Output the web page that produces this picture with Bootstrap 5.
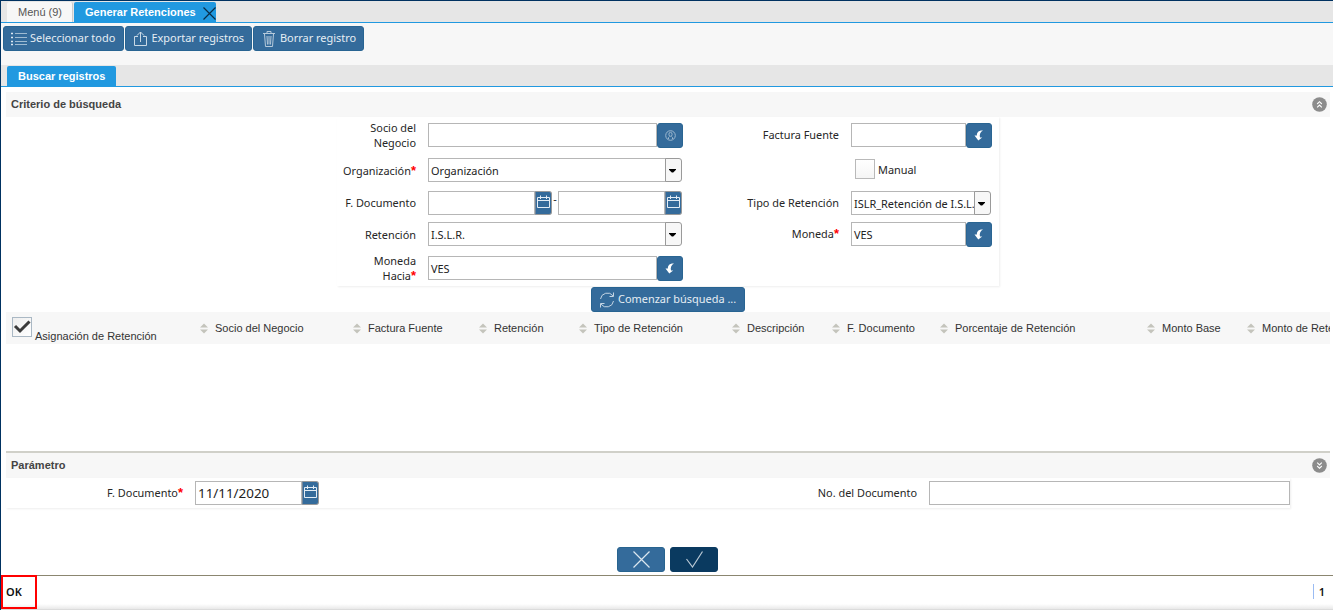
<!DOCTYPE html>
<html lang="es">
<head>
<meta charset="utf-8">
<meta name="viewport" content="width=device-width, initial-scale=1">
<title>Generar Retenciones</title>
<link href="https://cdn.jsdelivr.net/npm/bootstrap@5.3.0/dist/css/bootstrap.min.css" rel="stylesheet">
<style>
:root { --blue:#346b9b; --tab:#2199e0; --navy:#0a3a60; --soft:#f7f7f7; --line:#b6b6b6; }
body { font-family:"Noto Sans",sans-serif; font-size:10.9px; line-height:15px; color:#262626; background:#fff; height:610px; overflow:hidden; }
.window { height:610px; border-top:1px solid #003261; border-left:1px solid #003261; overflow:hidden; }
.arial { font-family:"Liberation Sans",Arial,sans-serif; }
.tabstrip { height:22px; background:#e6e6e6; border-bottom:1px solid var(--tab); padding-top:1px; font-size:11px; }
.tabitem { height:20px; line-height:20px; border-radius:2px 2px 0 0; }
.tab-menu { width:66px; margin-left:6px; padding-left:11px; background:var(--soft); border-right:1px solid #ccc; color:#555; }
.tab-active { background:var(--tab); color:#fff; font-weight:bold; padding-left:11px; }
.tab-main { width:142px; margin-left:1px; }
.tab-main svg { margin:5px 0 0 7px; }
.tab-search { width:109px; margin-left:6px; }
.tools { height:42px; background:var(--soft); padding:3px 0 0 2px; gap:1px; }
.act { height:25px; background:var(--blue); color:#e6eef4; border:1px solid #286492; border-radius:3px; font-size:10.950px; line-height:22px; padding:0; display:flex; align-items:flex-start; white-space:nowrap; }
.act svg, .icobtn svg { flex:none; }
.act-select { width:121px; } .act-export { width:127px; } .act-delete { width:111px; }
.seek { width:154px; margin-left:590px; margin-top:1px; }
.section-head { height:25px; margin:0 3px 0 5px; padding:0 0 0 5px; background:var(--soft); font-weight:bold; color:#444; font-size:11px; line-height:25px; }
.first { margin-top:5px; }
.second { border-top:2px solid #d0d0c9; height:27px; }
.fold { width:15px; height:15px; margin-right:3px; }
.criteria { width:662px; height:169px; margin-left:336px; box-shadow:1px 1px 2px rgba(0,0,0,.07); }
.frow { height:36px; }
.frow.r2 { height:34px; } .frow.r3 { height:32px; } .frow.r4 { height:30px; margin-bottom:1px; }
.lbl { text-align:right; }
.up { padding-bottom:1px; }
.l1 { width:79px; margin-right:12px; } .l2 { width:156px; margin-right:12px; }
.f1 { width:255px; } .f2 { width:141px; }
.trim { padding-right:1px; }
.req::after { content:"*"; color:#f00; font-family:"Liberation Sans",sans-serif; font-weight:bold; font-size:13px; line-height:1; }
.box { height:24px; border:1px solid var(--line); background:#fff; padding:1px 0 0 2px; line-height:22px; overflow:hidden; white-space:nowrap; color:#222; min-width:0; flex:1 1 0; }
.icobtn { width:26px; height:25px; margin-bottom:-1px; background:var(--blue); border:1px solid #2a6592; border-radius:3px; padding:0; display:flex; align-items:center; justify-content:center; }
.drop { width:17px; height:24px; border:1px solid #9a9a9a; border-radius:0 3px 3px 0; background:var(--soft); display:flex; align-items:center; justify-content:center; padding:0 1px 0 0; margin-left:-1px; }
.drop svg { margin:1px 1px 0 0; }
.cal { width:17px; height:24px; border:1px solid #999; border-left-color:#71859a; border-radius:0 3px 3px 0; background:var(--blue); padding:0; display:flex; justify-content:flex-start; }
.calico { flex:none; margin:3px 0 0 1px; }
.dash { width:6px; line-height:16px; text-align:center; }
.manual { padding:0 0 1px 4px; gap:3px; height:22px; margin-bottom:1px; }
.tick { width:20px; height:20px; border:1px solid #b9b9b9; background:linear-gradient(#fff,#f5f5f5); }
.tick + span { padding-top:1px; }
.colhead { height:32px; margin:0 3px 0 5px; background:var(--soft); overflow:hidden; color:#333; font-size:11px; white-space:nowrap; }
.colcell { flex:none; line-height:32px; display:flex; align-items:center; gap:7px; }
.colcell:nth-child(1){width:194px;gap:3px;align-items:flex-start;padding-left:6px;padding-top:5px}
.colcell:nth-child(2){width:153px}.colcell:nth-child(3){width:126px}.colcell:nth-child(4){width:100px}
.colcell:nth-child(5){width:153px}.colcell:nth-child(6){width:100px}.colcell:nth-child(7){width:108px}
.colcell:nth-child(8){width:207px}.colcell:nth-child(9){width:100px}
.colcell:nth-child(1) span { line-height:14px; margin-top:12px; }
.tick-head { width:20px; height:20px; border:1px solid #aab8c4; background:linear-gradient(135deg,#eee,#fff); }
.grid-body { height:107px; }
.params { width:1284px; height:30px; margin-left:5px; box-shadow:1px 1px 2px rgba(0,0,0,.07); }
.p1 { width:177px; margin-right:12px; }
.pdate { width:124px; } .pdate .box { font-size:13.4px; padding-top:0; }
.p2 { width:598px; margin-right:12px; }
.pdoc { flex:0 0 361px; }
.confirm { gap:5px; margin-top:39px; padding-left:616px; }
.big { width:48px; height:25px; border:1px solid #28648f; border-radius:3px; background:var(--blue); padding:0; display:flex; align-items:center; justify-content:center; }
.big.ok { background:var(--navy); border-color:var(--navy); }
.statusbar { height:35px; margin-top:3px; border-top:1px solid #8b8670; font-weight:600; font-size:11px; color:#111; background:linear-gradient(#fff 28px,#e9e9e9 33px,#cfcfcf); }
.okbox { width:36px; height:34px; margin-top:-1px; border:2px solid #f00; padding-left:3px; line-height:30px; }
.count { height:15px; margin:8px 8px 0 0; padding-left:5px; border-left:1px solid #9bbcf3; }
</style>
<script src="https://cdn.jsdelivr.net/npm/bootstrap@5.3.0/dist/js/bootstrap.bundle.min.js"></script>
</head>
<body>
<svg width="0" height="0" class="d-none">
  <symbol id="cal" viewBox="0 0 13 13"><path d="M.5 2.500h12v10H.5zM.5 5.500h12M3.500 .5v3.500M9.500 .5v3.500" fill="none" stroke="#e4edf5"/></symbol>
  <symbol id="caret" viewBox="0 0 7 4"><path d="M0 0h7v.8L4.200 3.500H2.800L0 .8z" fill="#000"/></symbol>
  <symbol id="back" viewBox="0 0 10 11"><path d="M9 .5C4.500.2 2.800 2.500 2.900 5.500H.5L4.300 10.500 8.200 7.500H6C5.200 4.600 6.300 2 9 .5z" fill="#fff"/></symbol>
  <symbol id="sort" viewBox="0 0 8 11"><path d="M4 .5 8 4.500H0zM4 10.500 0 6.500h8z" fill="#c4c4bc"/></symbol>
</svg>
<main class="window d-flex flex-column">
  <nav class="tabstrip arial d-flex flex-shrink-0">
    <div class="tabitem tab-menu">Menú (9)</div>
    <div class="tabitem tab-active tab-main d-flex"><span class="text-nowrap">Generar Retenciones</span><svg width="13" height="13" viewBox="0 0 13 13"><path d="m.5.5 12 12m0-12-12 12" stroke="#0a2c46" stroke-width="1.200"/></svg></div>
  </nav>
  <div class="tools d-flex flex-shrink-0">
    <button class="act act-select"><svg width="26" height="23" viewBox="0 0 26 23"><path d="M11 6.500h12M11 10.500h12M11 14.500h12M11 17.500h12" stroke="#9fbbd2"/><path d="M7 6.500h2M7 10.500h2M7 14.500h2M7 17.500h2" stroke="#dce8f1" stroke-width="1.500"/></svg>Seleccionar todo</button>
    <button class="act act-export"><svg width="25.500" height="23" viewBox="0 0 25.500 23"><path d="M12 9.500H8.500v9h12v-9H17M14.500 15V5M11 8.500l3.500-3.500L18 8.500" fill="none" stroke="#c9d9e6"/></svg>Exportar registros</button>
    <button class="act act-delete"><svg width="26" height="23" viewBox="0 0 26 23"><path d="M9 6.500h12M10.500 7l1 12.500h7l1-12.500M13 6V4.500h4V6M13 9l.5 8.500M15 9v8.500M17 9l-.5 8.500" fill="none" stroke="#b6cadb"/></svg>Borrar registro</button>
  </div>
  <nav class="tabstrip arial d-flex flex-shrink-0">
    <div class="tabitem tab-active tab-search">Buscar registros</div>
  </nav>
  <header class="section-head first arial d-flex justify-content-between align-items-center flex-shrink-0"><span>Criterio de búsqueda</span>
    <svg class="fold" viewBox="0 0 15 15"><circle cx="7.500" cy="7.500" r="7.300" fill="#8c8c8c"/><path d="m5.200 7 2.300-2.300L9.800 7M5.200 10.300 7.500 8l2.300 2.300" fill="none" stroke="#fff" stroke-width="1.100"/></svg></header>
  <section class="criteria flex-shrink-0">
    <div class="frow d-flex align-items-center">
      <label class="lbl l1">Socio del<br>Negocio</label>
      <div class="f1 d-flex"><div class="box"></div><button class="icobtn"><svg width="11" height="11" viewBox="0 0 11 11"><g fill="none" stroke="#9db8cf"><circle cx="5.500" cy="5.500" r="4.800"/><path d="M3.500 9V7.500L4.500 6.500M7.500 9V7.500L6.500 6.500"/><ellipse cx="5.500" cy="4.300" rx="1.600" ry="2"/></g></svg></button></div>
      <label class="lbl l2 up">Factura Fuente</label>
      <div class="f2 d-flex"><div class="box"></div><button class="icobtn"><svg width="10" height="11"><use href="#back"/></svg></button></div>
    </div>
    <div class="frow r2 d-flex align-items-center">
      <label class="lbl l1 req">Organización</label>
      <div class="f1 d-flex trim"><div class="box">Organización</div><button class="drop"><svg width="7" height="4"><use href="#caret"/></svg></button></div>
      <span class="l2"></span>
      <div class="f2 d-flex align-items-center manual"><span class="tick"></span><span>Manual</span></div>
    </div>
    <div class="frow r3 d-flex align-items-center">
      <label class="lbl l1 up">F. Documento</label>
      <div class="f1 d-flex trim"><div class="box"></div><button class="cal"><svg class="calico" width="13" height="13"><use href="#cal"/></svg></button><span class="dash">-</span><div class="box"></div><button class="cal"><svg class="calico" width="13" height="13"><use href="#cal"/></svg></button></div>
      <label class="lbl l2 up">Tipo de Retención</label>
      <div class="f2 d-flex trim"><div class="box">ISLR_Retención de I.S.L.</div><button class="drop"><svg width="7" height="4"><use href="#caret"/></svg></button></div>
    </div>
    <div class="frow r4 d-flex align-items-center">
      <label class="lbl l1">Retención</label>
      <div class="f1 d-flex trim"><div class="box">I.S.L.R.</div><button class="drop"><svg width="7" height="4"><use href="#caret"/></svg></button></div>
      <label class="lbl l2 req up">Moneda</label>
      <div class="f2 d-flex"><div class="box">VES</div><button class="icobtn"><svg width="10" height="11"><use href="#back"/></svg></button></div>
    </div>
    <div class="frow d-flex align-items-center">
      <label class="lbl l1 req">Moneda<br>Hacia</label>
      <div class="f1 d-flex"><div class="box">VES</div><button class="icobtn"><svg width="10" height="11"><use href="#back"/></svg></button></div>
    </div>
  </section>
  <button class="act seek flex-shrink-0"><svg width="26" height="23" viewBox="0 0 26 23"><path d="M8.500 11a7 7 0 0 1 12.500-3.200M21.500 13A7 7 0 0 1 9 16.200M21.500 4.500V8.500h-4M8.500 19.500v-4h4" fill="none" stroke="#c3d4e3"/></svg>Comenzar búsqueda ...</button>
  <div class="colhead arial d-flex flex-shrink-0">
    <div class="colcell"><div class="tick-head"><svg class="d-block" width="18" height="18" viewBox="0 0 18 18"><path d="m2 8 5 5L16.500 3.500" fill="none" stroke="#3b3b3b" stroke-width="3"/></svg></div><span>Asignación de Retención</span></div>
    <div class="colcell"><svg width="8" height="11"><use href="#sort"/></svg>Socio del Negocio</div>
    <div class="colcell"><svg width="8" height="11"><use href="#sort"/></svg>Factura Fuente</div>
    <div class="colcell"><svg width="8" height="11"><use href="#sort"/></svg>Retención</div>
    <div class="colcell"><svg width="8" height="11"><use href="#sort"/></svg>Tipo de Retención</div>
    <div class="colcell"><svg width="8" height="11"><use href="#sort"/></svg>Descripción</div>
    <div class="colcell"><svg width="8" height="11"><use href="#sort"/></svg>F. Documento</div>
    <div class="colcell"><svg width="8" height="11"><use href="#sort"/></svg>Porcentaje de Retención</div>
    <div class="colcell"><svg width="8" height="11"><use href="#sort"/></svg>Monto Base</div>
    <div class="colcell"><svg width="8" height="11"><use href="#sort"/></svg>Monto de Retención</div>
  </div>
  <div class="grid-body flex-shrink-0"></div>
  <header class="section-head second arial d-flex justify-content-between align-items-center flex-shrink-0"><span>Parámetro</span>
    <svg class="fold" viewBox="0 0 15 15"><circle cx="7.500" cy="7.500" r="7.300" fill="#8c8c8c"/><path d="m5.200 4.700 2.300 2.300L9.800 4.700M5.200 8l2.300 2.300L9.800 8" fill="none" stroke="#fff" stroke-width="1.100"/></svg></header>
  <section class="params d-flex align-items-center flex-shrink-0">
    <label class="lbl p1 req up">F. Documento</label>
    <div class="pdate d-flex"><div class="box">11/11/2020</div><button class="cal"><svg class="calico" width="13" height="13"><use href="#cal"/></svg></button></div>
    <label class="lbl p2 up">No. del Documento</label>
    <div class="box pdoc"></div>
  </section>
  <div class="confirm d-flex flex-shrink-0">
    <button class="big"><svg width="17" height="17" viewBox="0 0 17 17"><path d="m.5.500 16 16m0-16-16 16" stroke="#dbe6ef" stroke-width="1.200"/></svg></button>
    <button class="big ok"><svg width="17" height="17" viewBox="0 0 17 17"><path d="m.5 8 6 8L16.500.500" fill="none" stroke="#b9c8d4" stroke-width="1.200"/></svg></button>
  </div>
  <footer class="statusbar d-flex justify-content-between flex-shrink-0"><div class="okbox">OK</div><div class="count">1</div></footer>
</main>
</body>
</html>
